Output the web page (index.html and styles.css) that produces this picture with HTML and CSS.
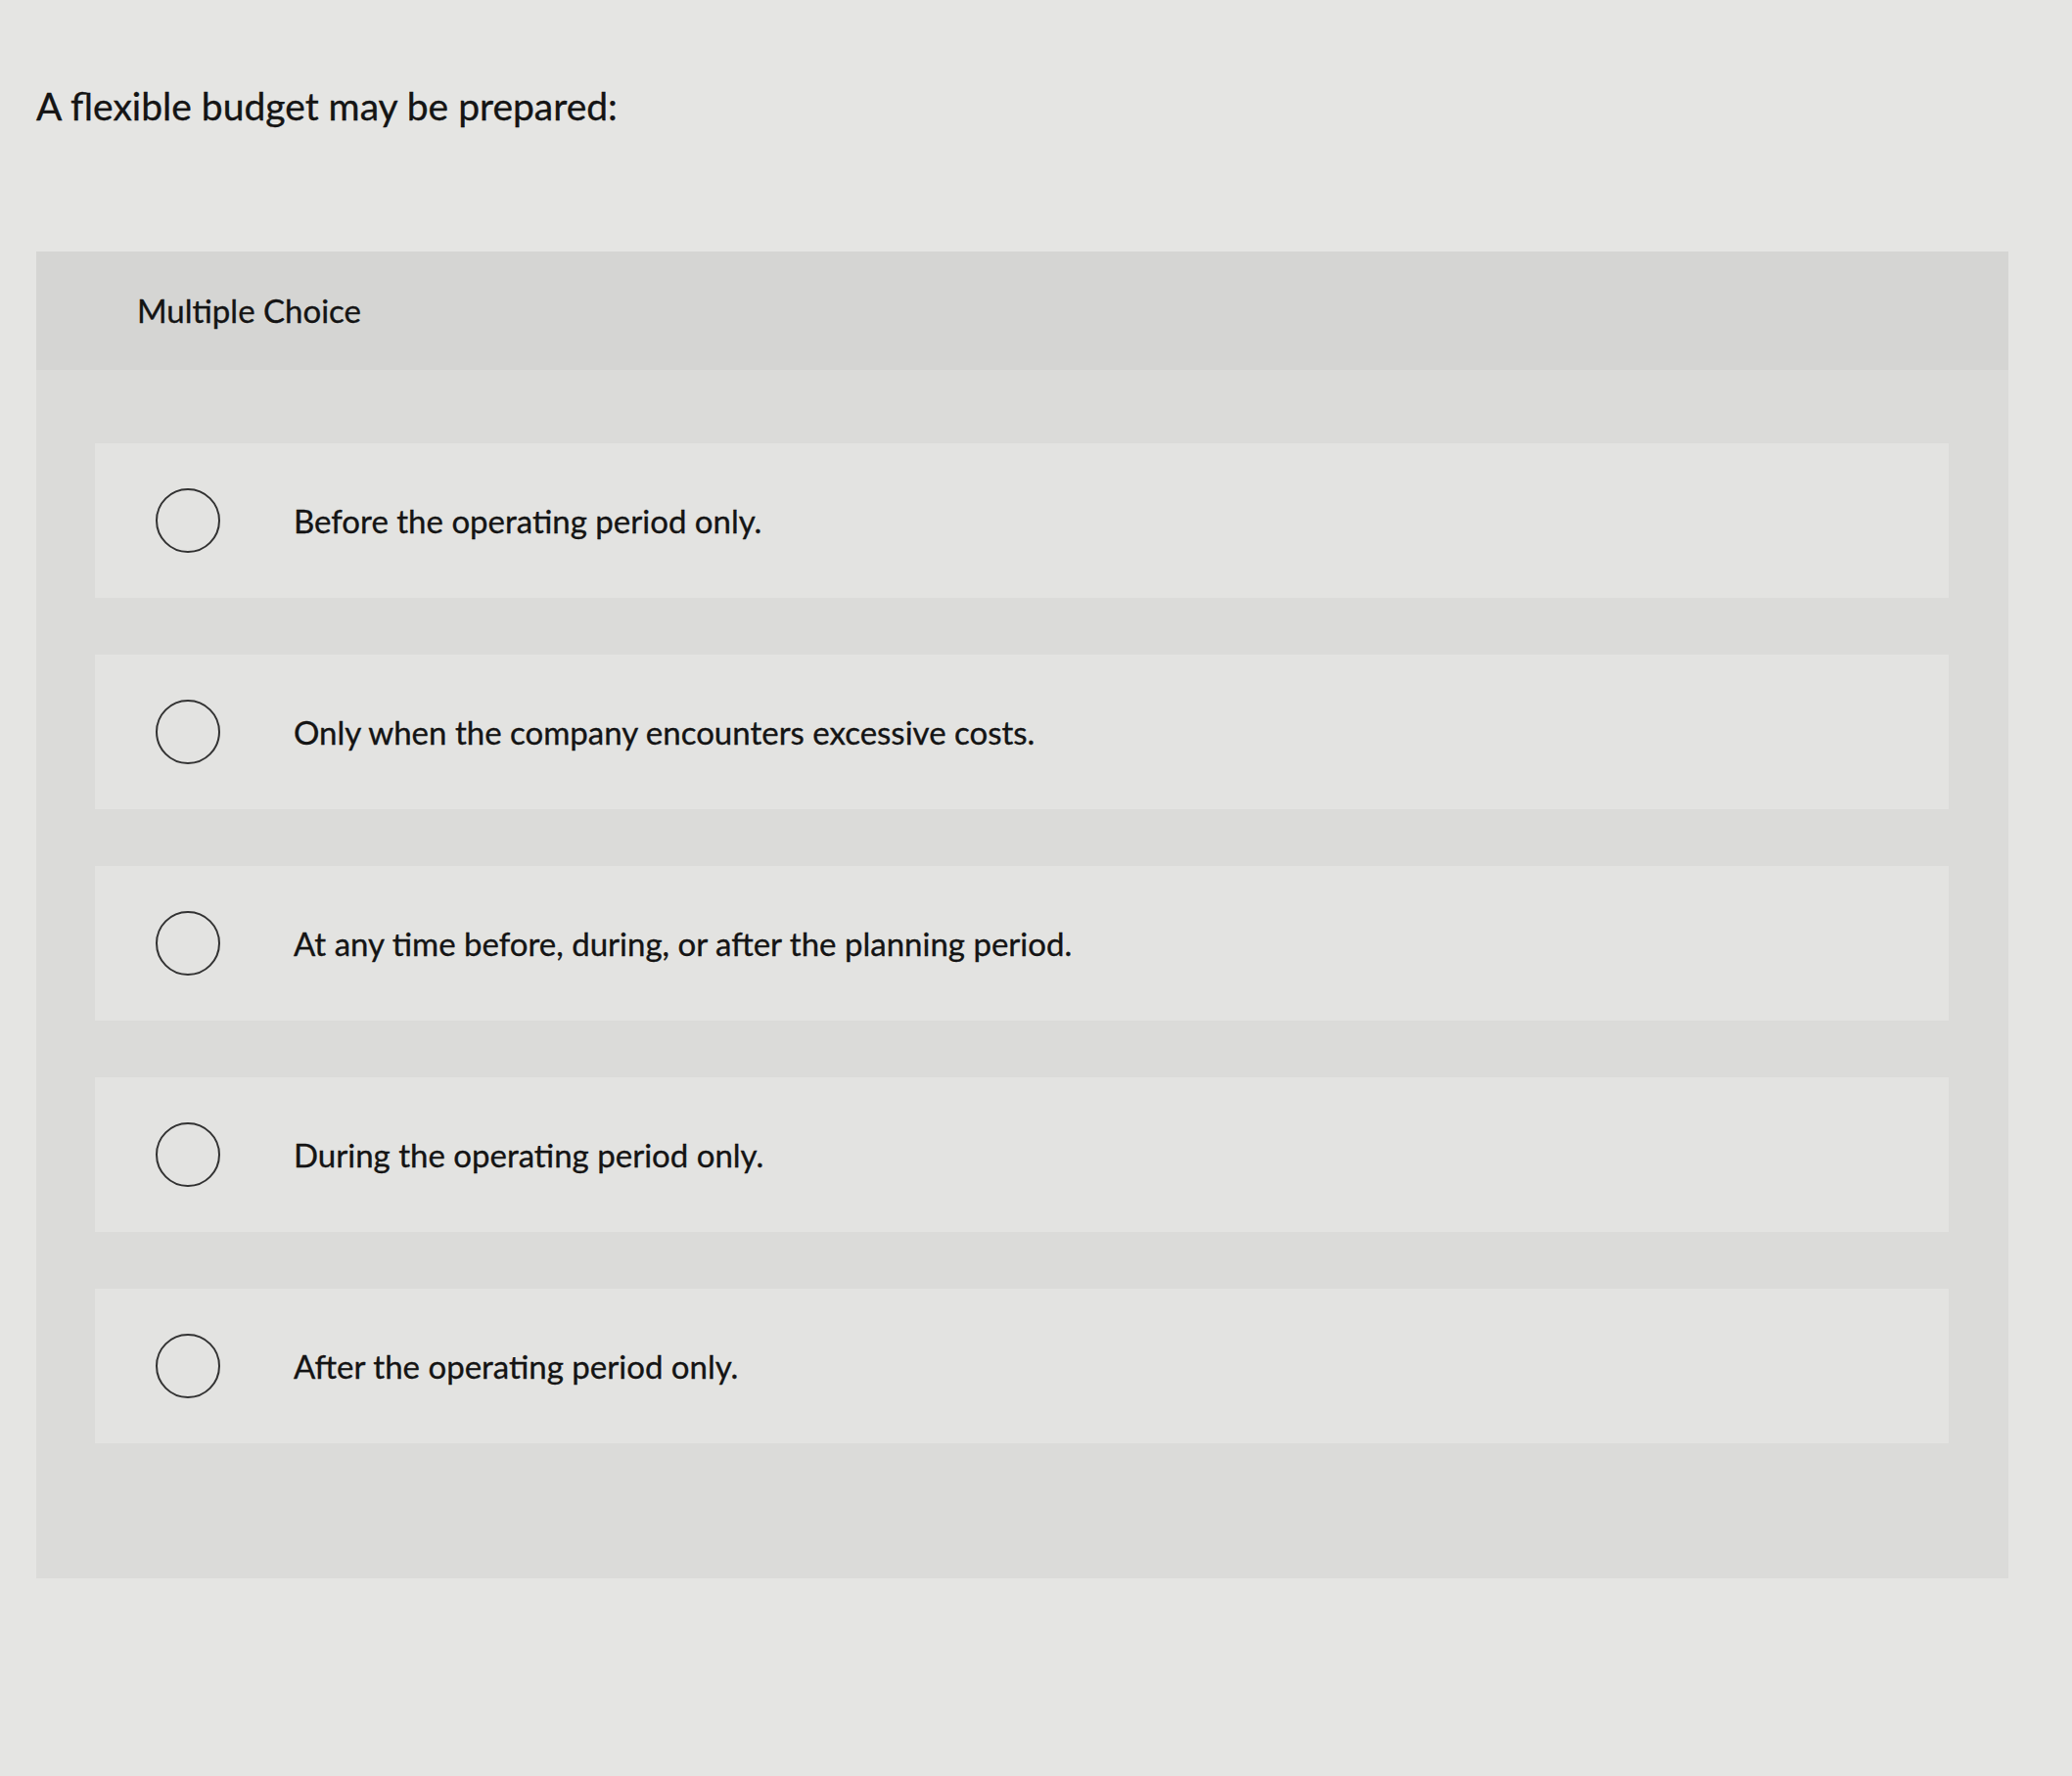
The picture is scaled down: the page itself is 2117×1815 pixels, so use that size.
FILE: index.html
```html
<!DOCTYPE html>
<html lang="en">
<head>
<meta charset="utf-8">
<title>A flexible budget may be prepared</title>
<link rel="stylesheet" href="styles.css">
</head>
<body>
<main class="page">
  <h1 class="question">A flexible budget may be prepared:</h1>
  <section class="mc">
    <header class="mc-head">Multiple Choice</header>
    <div class="mc-body">
      <label class="option"><span class="radio"></span><span class="opt-text">Before the operating period only.</span></label>
      <label class="option"><span class="radio"></span><span class="opt-text">Only when the company encounters excessive costs.</span></label>
      <label class="option"><span class="radio"></span><span class="opt-text">At any time before, during, or after the planning period.</span></label>
      <label class="option"><span class="radio"></span><span class="opt-text">During the operating period only.</span></label>
      <label class="option"><span class="radio"></span><span class="opt-text">After the operating period only.</span></label>
    </div>
  </section>
</main>
</body>
</html>
```

FILE: styles.css
```css
html, body {
  margin: 0;
  padding: 0;
}
body {
  background: #e5e5e3;
  font-family: Lato, "Open Sans", "Liberation Sans", sans-serif;
  color: #141414;
  width: 2117px;
  height: 1815px;
  overflow: hidden;
  -webkit-text-stroke: 0.35px #141414;
}
.page {
  padding: 0 65px 0 37px;
}
.question {
  margin: 0;
  padding-top: 83px;
  font-size: 39px;
  font-weight: 400;
  line-height: 50px;
}
.mc {
  margin-top: 124px;
  background: #dbdbd9;
  padding-bottom: 138px;
}
.mc-head {
  background: #d5d5d3;
  height: 121px;
  box-sizing: border-box;
  padding-left: 103px;
  padding-top: 40px;
  font-size: 33px;
  line-height: 40px;
}
.mc-body {
  display: flex;
  flex-direction: column;
  gap: 58px;
  padding: 75px 61px 0 60px;
}
.option {
  display: flex;
  align-items: center;
  height: 158px;
  background: #e3e3e1;
  padding-left: 62px;
}
.radio {
  width: 66px;
  height: 66px;
  box-sizing: border-box;
  border: 2.5px solid #333333;
  border-radius: 50%;
  flex: none;
}
.opt-text {
  margin-left: 75px;
  font-size: 33px;
  line-height: 40px;
}
```
